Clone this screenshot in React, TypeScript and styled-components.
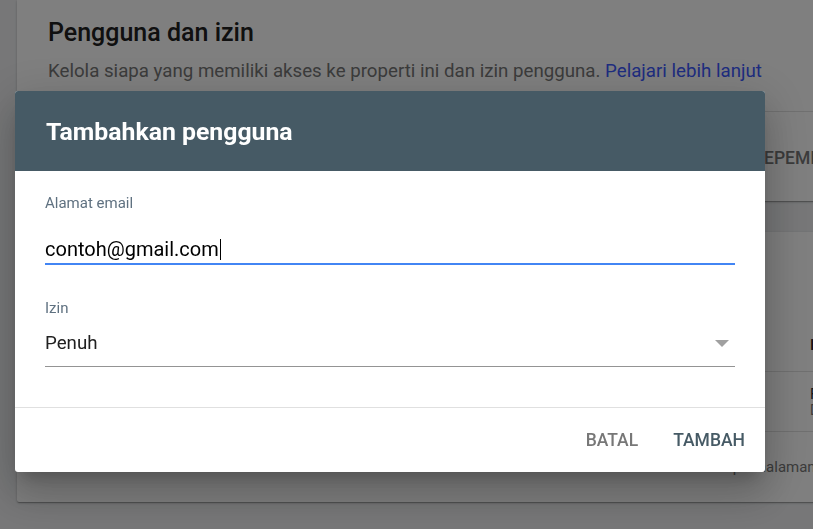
import styled, { createGlobalStyle } from "styled-components";

const GlobalStyle = createGlobalStyle`
  html, body {
    margin: 0;
    padding: 0;
    width: 100%;
    height: 100%;
    overflow: hidden;
    background: #eeeff1;
    font-family: Roboto, "Liberation Sans", Arial, sans-serif;
  }
`

const Page = styled.div`
  width: 1005px;
  padding-left: 17px;
`

const Card = styled.section`
  background: #ffffff;
  border-radius: 0 0 2px 2px;
  box-shadow: 0 1px 3px rgba(0, 0, 0, 0.2), 0 1px 1px rgba(0, 0, 0, 0.14), 0 2px 1px -1px rgba(0, 0, 0, 0.12);

  & + & {
    margin-top: 31px;
  }
`

const Intro = styled.div`
  height: 112px;
  box-sizing: border-box;
  padding: 19px 31px 0;
  border-bottom: 1px solid #e0e0e0;
`

const PageTitle = styled.h1`
  margin: 0;
  font-size: 25px;
  line-height: 28px;
  font-weight: 500;
  color: #212121;
`

const PageDesc = styled.p`
  margin: 12px 0 0;
  font-size: 18.7px;
  line-height: 24px;
  white-space: nowrap;
  color: #777777;
`

const Link = styled.a`
  color: #3d5afe;
  text-decoration: none;
`

const Tabs = styled.div`
  height: 89px;
  padding-left: 31px;
  display: grid;
  grid-template-columns: repeat(4, 235px);
  align-items: center;
`

const Tab = styled.div`
  margin-top: 3px;
  font-size: 17.5px;
  font-weight: 500;
  color: #777777;
  text-transform: uppercase;
`

const Toolbar = styled.div`
  height: 87px;
  padding: 0 31px;
  display: flex;
  align-items: center;
  font-size: 18px;
  color: #212121;
`

const TableRow = styled.div<{ $height: number }>`
  height: ${(p) => p.$height}px;
  box-sizing: border-box;
  padding-left: 31px;
  display: grid;
  grid-template-columns: 60px 380px 322px 1fr;
  align-items: center;
  border-bottom: 1px solid #e0e0e0;
`

const HeadCell = styled.div`
  font-size: 15px;
  font-weight: 500;
  color: #212121;
`

const Cell = styled.div`
  font-size: 15px;
  line-height: 16px;
  color: #263238;
`

const SubText = styled.div`
  font-size: 14px;
  line-height: 16px;
  color: #777777;
`

const TableFooter = styled.div`
  height: 70px;
  display: flex;
  align-items: center;
  justify-content: flex-end;
  gap: 32px;
  padding-right: 24px;
  font-size: 15px;
  color: #777777;
`

const Overlay = styled.div`
  position: fixed;
  inset: 0;
  background: rgba(0, 0, 0, 0.5);
`

const Dialog = styled.div`
  position: absolute;
  left: 15px;
  top: 91px;
  width: 750px;
  background: #ffffff;
  border-radius: 3px;
  overflow: hidden;
  box-shadow: 0 11px 15px -7px rgba(0, 0, 0, 0.2), 0 24px 38px 3px rgba(0, 0, 0, 0.14), 0 9px 46px 8px rgba(0, 0, 0, 0.12);
`

const DialogHeader = styled.div`
  height: 80px;
  padding-left: 31px;
  display: flex;
  align-items: center;
  background: #465a65;
`

const DialogTitle = styled.h2`
  margin: 0;
  font-size: 24.8px;
  font-weight: 700;
  color: #ffffff;
`

const DialogBody = styled.div`
  padding: 24px 30px 40px;
  border-bottom: 1px solid #e0e0e0;
`

const Label = styled.div<{ $gap?: number }>`
  margin-top: ${(p) => p.$gap ?? 0}px;
  font-size: 15px;
  line-height: 16px;
  color: #5f7180;
`

const Field = styled.div<{ $focused?: boolean; $gap: number }>`
  margin-top: ${(p) => p.$gap}px;
  display: flex;
  align-items: center;
  justify-content: space-between;
  font-size: ${(p) => (p.$focused ? 20 : 18.7)}px;
  line-height: 24px;
  color: ${(p) => (p.$focused ? "#000000" : "#212121")};
  padding-bottom: ${(p) => (p.$focused ? 2 : 11)}px;
  border-bottom: ${(p) => (p.$focused ? "2px solid #4285f4" : "1px solid #949494")};
`

const Value = styled.span`
  display: inline-flex;
  align-items: center;
`

const Caret = styled.span`
  display: inline-block;
  width: 1px;
  height: 21px;
  margin-left: 1px;
  background: #000000;
`

const Arrow = styled.span`
  margin-right: 6px;
  width: 0;
  height: 0;
  border-left: 7px solid transparent;
  border-right: 7px solid transparent;
  border-top: 7px solid #a0a0a0;
`

const DialogActions = styled.div`
  height: 64px;
  padding: 0 4px;
  display: flex;
  align-items: center;
  justify-content: flex-end;
  gap: 3px;
`

const Action = styled.button<{ $primary?: boolean }>`
  padding: 8px 16px;
  border: none;
  background: none;
  font-family: inherit;
  font-size: 17.5px;
  font-weight: 500;
  text-transform: uppercase;
  color: ${(p) => (p.$primary ? "#465a65" : "#777777")};
  cursor: pointer;
`

const App = () => {
  return (
    <>
      <GlobalStyle />
      <Page>
        <Card>
          <Intro>
            <PageTitle>Pengguna dan izin</PageTitle>
            <PageDesc>
              Kelola siapa yang memiliki akses ke properti ini dan izin pengguna.{" "}
              <Link href="#">Pelajari lebih lanjut</Link>
            </PageDesc>
          </Intro>
          <Tabs>
            <Tab>Pengguna</Tab>
            <Tab>Grup pengguna</Tab>
            <Tab>Permintaan</Tab>
            <Tab>Kepemilikan</Tab>
          </Tabs>
        </Card>
        <Card>
          <Toolbar>Daftar pengguna</Toolbar>
          <TableRow $height={53}>
            <HeadCell />
            <HeadCell>Nama</HeadCell>
            <HeadCell>Email</HeadCell>
            <HeadCell>Izin</HeadCell>
          </TableRow>
          <TableRow $height={60}>
            <Cell />
            <Cell>Admin</Cell>
            <Cell>admin@gmail.com</Cell>
            <div>
              <Cell>Full</Cell>
              <SubText>Diverifikasi</SubText>
            </div>
          </TableRow>
          <TableFooter>
            <span>Baris per halaman: 10 ▾</span>
            <span>1-1 dari 1</span>
            <span>‹ &nbsp; ›</span>
          </TableFooter>
        </Card>
      </Page>
      <Overlay>
        <Dialog>
          <DialogHeader>
            <DialogTitle>Tambahkan pengguna</DialogTitle>
          </DialogHeader>
          <DialogBody>
            <Label>Alamat email</Label>
            <Field $focused $gap={26}>
              <Value>
                contoh@gmail.com
                <Caret />
              </Value>
            </Field>
            <Label $gap={35}>Izin</Label>
            <Field $gap={15}>
              <Value>Penuh</Value>
              <Arrow />
            </Field>
          </DialogBody>
          <DialogActions>
            <Action>Batal</Action>
            <Action $primary>Tambah</Action>
          </DialogActions>
        </Dialog>
      </Overlay>
    </>
  );
};

export default App;
